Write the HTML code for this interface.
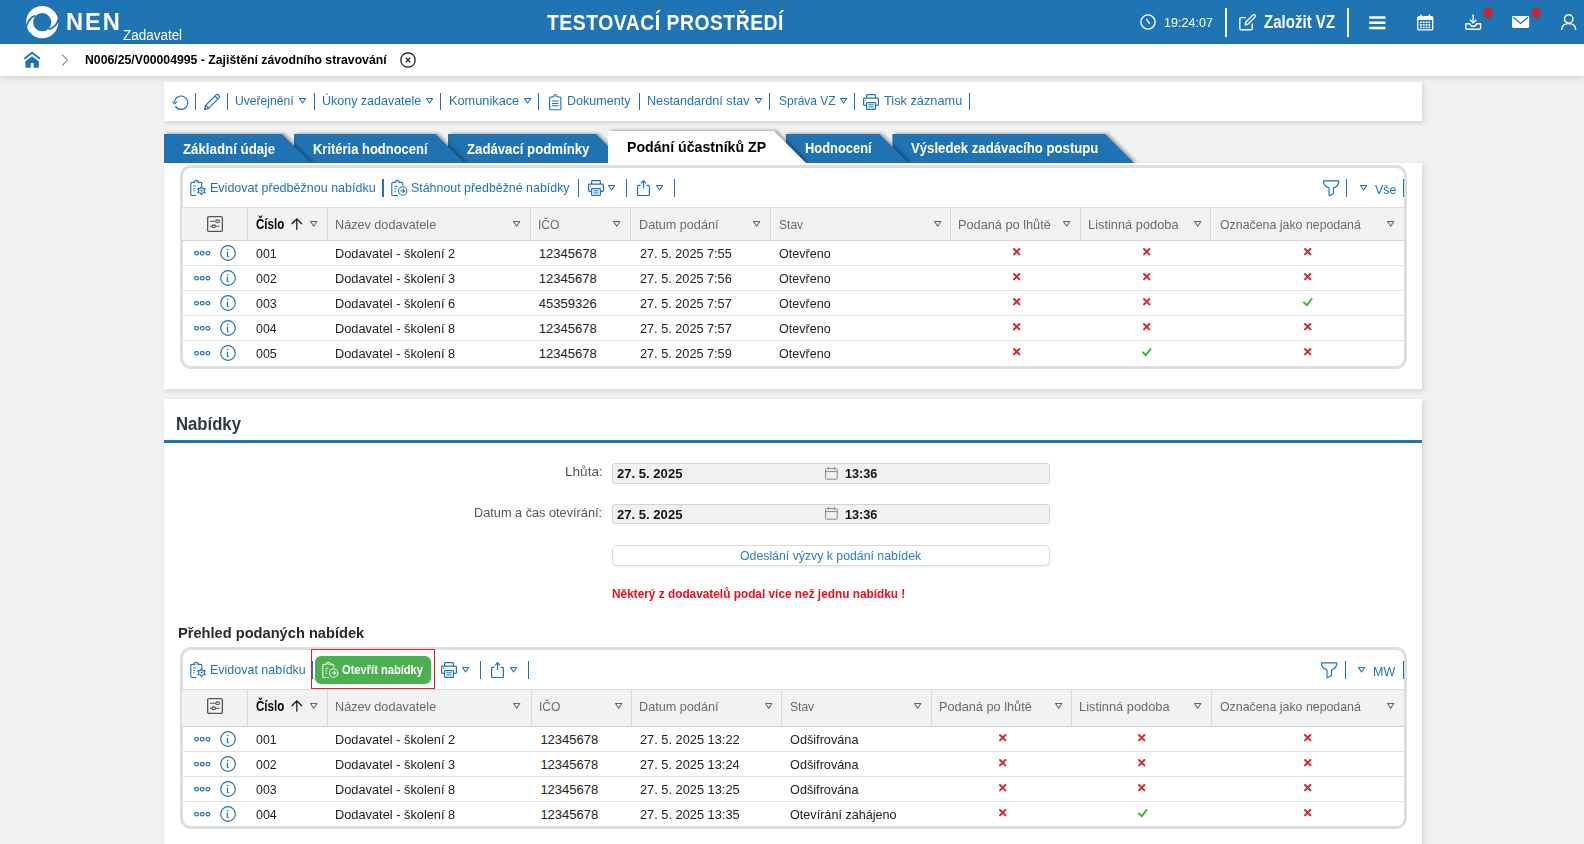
<!DOCTYPE html>
<html><head><meta charset="utf-8"><title>NEN</title>
<style>
html,body{margin:0;padding:0;}
body{width:1584px;height:844px;overflow:hidden;position:relative;background:#f1f1f1;font-family:"Liberation Sans",sans-serif;}
</style></head><body>
<div style="position:absolute;left:0px;top:0px;width:1584px;height:44px;background:#1f74b4"></div><svg style="position:absolute;left:25.7px;top:5.7px;width:32.4px;height:32.4px;overflow:visible" viewBox="0 0 32.4 32.4" ><circle cx="16.2" cy="16.2" r="12.6" fill="none" stroke="#fff" stroke-width="7"/><path d="M-0.2 22.6 Q2.6 11.2 9.4 9.6" fill="none" stroke="#1f74b4" stroke-width="1.8"/><path d="M32.6 12.4 Q31 21.4 22.4 23.4" fill="none" stroke="#1f74b4" stroke-width="1.8"/></svg><div style="position:absolute;left:65.80px;top:9.86px;font-size:24.5px;line-height:24.5px;font-weight:700;color:#fff;white-space:nowrap;transform:scaleX(0.9665);transform-origin:0 0;letter-spacing:2px">NEN</div><div style="position:absolute;left:123.00px;top:28.15px;font-size:14px;line-height:14px;font-weight:400;color:#fff;white-space:nowrap;transform:scaleX(0.9613);transform-origin:0 0;">Zadavatel</div><div style="position:absolute;left:547.00px;top:11.55px;font-size:22.5px;line-height:22.5px;font-weight:700;color:#fff;white-space:nowrap;transform:scaleX(0.8599);transform-origin:0 0;letter-spacing:0.6px">TESTOVACÍ PROSTŘEDÍ</div><svg style="position:absolute;left:1139.5px;top:14.2px;width:16px;height:16px;overflow:visible" viewBox="0 0 16 16" ><circle cx="8" cy="8" r="7.1" fill="none" stroke="#fff" stroke-width="1.4"/><path d="M6.6 5.4 L9.4 9.4" stroke="#fff" stroke-width="1.4" stroke-linecap="round"/></svg><div style="position:absolute;left:1164.00px;top:16.00px;font-size:13px;line-height:13px;font-weight:400;color:#fff;white-space:nowrap;transform:scaleX(0.9668);transform-origin:0 0;">19:24:07</div><div style="position:absolute;left:1225.2px;top:8px;width:2.2px;height:28.7px;background:#fff"></div><svg style="position:absolute;left:1239px;top:13.8px;width:17.5px;height:16.5px;overflow:visible" viewBox="0 0 17.5 16.5" ><path d="M7 3.6 H2 Q0.8 3.6 0.8 4.8 V14.6 Q0.8 15.8 2 15.8 H12 Q13.2 15.8 13.2 14.6 V9.6" fill="none" stroke="#fff" stroke-width="1.4"/><path d="M6.2 10.8 L6.8 8 L14 0.9 Q15 0.2 16 1 Q16.8 2 16 3 L8.8 10.2 Z" fill="none" stroke="#fff" stroke-width="1.4" stroke-linejoin="round"/></svg><div style="position:absolute;left:1263.60px;top:13.70px;font-size:17.6px;line-height:17.6px;font-weight:700;color:#fff;white-space:nowrap;transform:scaleX(0.8556);transform-origin:0 0;">Založit VZ</div><div style="position:absolute;left:1347.3px;top:8px;width:2.2px;height:28.7px;background:#fff"></div><svg style="position:absolute;left:1368.8px;top:15.5px;width:16.6px;height:13.4px;overflow:visible" viewBox="0 0 16.6 13.4" ><path d="M1.2 1.4 H15.4 M1.2 6.7 H15.4 M1.2 12 H15.4" stroke="#fff" stroke-width="2.5" stroke-linecap="round"/></svg><svg style="position:absolute;left:1416.6px;top:13.6px;width:16.4px;height:16.6px;overflow:visible" viewBox="0 0 16.4 16.6" ><rect x="0.7" y="2.8" width="15" height="13.1" rx="1.2" fill="none" stroke="#fff" stroke-width="1.4"/><rect x="0.7" y="2.8" width="15" height="3.2" fill="#fff"/><path d="M4 0.5 V3.5 M12.4 0.5 V3.5" stroke="#fff" stroke-width="1.4"/><rect x="3.0" y="7.4" width="1.8" height="1.7" fill="#fff"/><rect x="3.0" y="10.0" width="1.8" height="1.7" fill="#fff"/><rect x="3.0" y="12.600000000000001" width="1.8" height="1.7" fill="#fff"/><rect x="5.8" y="7.4" width="1.8" height="1.7" fill="#fff"/><rect x="5.8" y="10.0" width="1.8" height="1.7" fill="#fff"/><rect x="5.8" y="12.600000000000001" width="1.8" height="1.7" fill="#fff"/><rect x="8.6" y="7.4" width="1.8" height="1.7" fill="#fff"/><rect x="8.6" y="10.0" width="1.8" height="1.7" fill="#fff"/><rect x="8.6" y="12.600000000000001" width="1.8" height="1.7" fill="#fff"/><rect x="11.399999999999999" y="7.4" width="1.8" height="1.7" fill="#fff"/><rect x="11.399999999999999" y="10.0" width="1.8" height="1.7" fill="#fff"/><rect x="11.399999999999999" y="12.600000000000001" width="1.8" height="1.7" fill="#fff"/></svg><svg style="position:absolute;left:1464.7px;top:14px;width:16.4px;height:16px;overflow:visible" viewBox="0 0 16.4 16" ><path d="M8.2 0.6 V9 M5 5.8 L8.2 9 L11.4 5.8" fill="none" stroke="#fff" stroke-width="1.4" stroke-linejoin="round"/><path d="M0.8 9.8 V14.2 Q0.8 15.3 1.9 15.3 H14.5 Q15.6 15.3 15.6 14.2 V9.8 H11.6 Q10.8 12.4 8.2 12.4 Q5.6 12.4 4.8 9.8 Z" fill="none" stroke="#fff" stroke-width="1.4" stroke-linejoin="round"/></svg><div style="position:absolute;left:1483px;top:7.9px;width:10px;height:10px;border-radius:50%;background:#c8282d"></div><svg style="position:absolute;left:1512px;top:16px;width:17.2px;height:12px;overflow:visible" viewBox="0 0 17.2 12" ><rect x="0" y="0" width="17.2" height="12" rx="1.4" fill="#fff"/><path d="M1.2 1.2 L8.6 7.4 L16 1.2" fill="none" stroke="#1f74b4" stroke-width="1.2"/></svg><div style="position:absolute;left:1531.1px;top:7.9px;width:10px;height:10px;border-radius:50%;background:#c8282d"></div><svg style="position:absolute;left:1561px;top:14px;width:15.4px;height:16.2px;overflow:visible" viewBox="0 0 15.4 16.2" ><circle cx="7.7" cy="4.9" r="4.2" fill="none" stroke="#fff" stroke-width="1.4"/><path d="M0.7 16 Q0.7 9.6 7.7 9.6 Q14.7 9.6 14.7 16" fill="none" stroke="#fff" stroke-width="1.4"/></svg><div style="position:absolute;left:0px;top:44px;width:1584px;height:32px;background:#fff;box-shadow:0 2px 5px rgba(0,0,0,0.13)"></div><svg style="position:absolute;left:24px;top:52px;width:16.2px;height:16.2px;overflow:visible" viewBox="0 0 16.2 16.2" ><path d="M0.9 6.2 L8.1 0.7 L15.3 6.2" fill="none" stroke="#1f73b3" stroke-width="1.8" stroke-linecap="round" stroke-linejoin="round"/><path d="M1.4 9.3 L8.1 4.3 L14.9 9.3 V15.0 Q14.9 15.7 14.2 15.7 H9.6 V11.0 H6.8 V15.7 H2.1 Q1.4 15.7 1.4 15.0 Z" fill="#1f73b3"/></svg><svg style="position:absolute;left:61px;top:54px;width:7.5px;height:12.5px;overflow:visible" viewBox="0 0 7.5 12.5" ><path d="M1 0.6 L6.6 6.1 L1 11.6" fill="none" stroke="#333" stroke-width="0.9"/></svg><div style="position:absolute;left:85.00px;top:53.00px;font-size:13px;line-height:13px;font-weight:700;color:#000;white-space:nowrap;transform:scaleX(0.9423);transform-origin:0 0;">N006/25/V00004995 - Zajištění závodního stravování</div><svg style="position:absolute;left:400.3px;top:52px;width:16px;height:16px;overflow:visible" viewBox="0 0 16 16" ><circle cx="8" cy="8" r="7.2" fill="none" stroke="#111" stroke-width="1.2"/><path d="M5.7 5.7 L10.3 10.3 M10.3 5.7 L5.7 10.3" stroke="#111" stroke-width="1.2"/></svg><div style="position:absolute;left:164px;top:82px;width:1258px;height:39px;background:#fff;box-shadow:2px 2px 5px rgba(0,0,0,0.12)"></div><svg style="position:absolute;left:172px;top:94.5px;width:16px;height:15px;overflow:visible" viewBox="0 0 16 15" ><path d="M3.4 11.1 A6.7 6.7 0 1 0 2.5 7.4" fill="none" stroke="#1f73b3" stroke-width="1.2"/><path d="M0.4 6.6 L2.7 8.9 L5.0 6.6" fill="none" stroke="#1f73b3" stroke-width="1.2" stroke-linejoin="round"/></svg><div style="position:absolute;left:194.75px;top:93px;width:1.3px;height:17px;background:#1f73b3"></div><svg style="position:absolute;left:204px;top:94px;width:16px;height:16px;overflow:visible" viewBox="0 0 16 16" ><path d="M0.6 15.5 L1.7 11.2 L12.2 0.9 Q13.4 -0.1 14.6 1.0 L15.0 1.4 Q16.0 2.6 15.0 3.8 L4.8 14.2 Z" fill="none" stroke="#1f73b3" stroke-width="1.2" stroke-linejoin="round"/><path d="M11.0 2.2 L13.8 5.0 M1.7 11.2 L4.8 14.2" fill="none" stroke="#1f73b3" stroke-width="1.2"/><path d="M0.6 15.5 L1.2 13.2 L2.9 14.9 Z" fill="#1f73b3"/></svg><div style="position:absolute;left:226.85px;top:93px;width:1.3px;height:17px;background:#1f73b3"></div><div style="position:absolute;left:235.47px;top:94.00px;font-size:13px;line-height:13px;font-weight:400;color:#1f73b3;white-space:nowrap;transform:scaleX(0.9316);transform-origin:0 0;">Uveřejnění</div><svg style="position:absolute;left:299.2px;top:98.4px;width:7.2px;height:5.6px;overflow:visible" viewBox="0 0 7.2 5.6" ><path d="M0.55 0.55 L6.65 0.55 L3.6 5.05 Z" fill="none" stroke="#1f73b3" stroke-width="1.1" stroke-linejoin="round"/></svg><div style="position:absolute;left:313.65000000000003px;top:93px;width:1.3px;height:17px;background:#1f73b3"></div><div style="position:absolute;left:322.04px;top:94.00px;font-size:13px;line-height:13px;font-weight:400;color:#1f73b3;white-space:nowrap;transform:scaleX(0.9598);transform-origin:0 0;">Úkony zadavatele</div><svg style="position:absolute;left:426.2px;top:98.4px;width:7.2px;height:5.6px;overflow:visible" viewBox="0 0 7.2 5.6" ><path d="M0.55 0.55 L6.65 0.55 L3.6 5.05 Z" fill="none" stroke="#1f73b3" stroke-width="1.1" stroke-linejoin="round"/></svg><div style="position:absolute;left:439.85px;top:93px;width:1.3px;height:17px;background:#1f73b3"></div><div style="position:absolute;left:449.02px;top:94.00px;font-size:13px;line-height:13px;font-weight:400;color:#1f73b3;white-space:nowrap;transform:scaleX(0.9814);transform-origin:0 0;">Komunikace</div><svg style="position:absolute;left:524.3px;top:98.4px;width:7.2px;height:5.6px;overflow:visible" viewBox="0 0 7.2 5.6" ><path d="M0.55 0.55 L6.65 0.55 L3.6 5.05 Z" fill="none" stroke="#1f73b3" stroke-width="1.1" stroke-linejoin="round"/></svg><div style="position:absolute;left:537.75px;top:93px;width:1.3px;height:17px;background:#1f73b3"></div><svg style="position:absolute;left:548.9px;top:94px;width:12.5px;height:16.4px;overflow:visible" viewBox="0 0 12.5 16.4" ><path d="M3.4 3 H1.5 Q0.6 3 0.6 3.9 V14.9 Q0.6 15.8 1.5 15.8 H11 Q11.9 15.8 11.9 14.9 V3.9 Q11.9 3 11 3 H9" fill="none" stroke="#1f73b3" stroke-width="1.15"/><path d="M3.4 3.6 Q3.4 2.4 4.6 2.3 Q5 0.5 6.25 0.5 Q7.5 0.5 7.9 2.3 Q9.1 2.4 9.1 3.6" fill="none" stroke="#1f73b3" stroke-width="1.15"/><circle cx="6.25" cy="2.2" r="0.55" fill="#1f73b3"/><path d="M3 7.1 H9.5 M3 9.5 H9.5 M3 11.8 H9.5" stroke="#1f73b3" stroke-width="1.05"/></svg><div style="position:absolute;left:567.03px;top:94.00px;font-size:13px;line-height:13px;font-weight:400;color:#1f73b3;white-space:nowrap;transform:scaleX(0.9655);transform-origin:0 0;">Dokumenty</div><div style="position:absolute;left:638.75px;top:93px;width:1.3px;height:17px;background:#1f73b3"></div><div style="position:absolute;left:647.03px;top:94.00px;font-size:13px;line-height:13px;font-weight:400;color:#1f73b3;white-space:nowrap;transform:scaleX(0.9714);transform-origin:0 0;">Nestandardní stav</div><svg style="position:absolute;left:754.8px;top:98.4px;width:7.2px;height:5.6px;overflow:visible" viewBox="0 0 7.2 5.6" ><path d="M0.55 0.55 L6.65 0.55 L3.6 5.05 Z" fill="none" stroke="#1f73b3" stroke-width="1.1" stroke-linejoin="round"/></svg><div style="position:absolute;left:768.75px;top:93px;width:1.3px;height:17px;background:#1f73b3"></div><div style="position:absolute;left:779.00px;top:94.00px;font-size:13px;line-height:13px;font-weight:400;color:#1f73b3;white-space:nowrap;transform:scaleX(0.9207);transform-origin:0 0;">Správa VZ</div><svg style="position:absolute;left:839.8px;top:98.4px;width:7.2px;height:5.6px;overflow:visible" viewBox="0 0 7.2 5.6" ><path d="M0.55 0.55 L6.65 0.55 L3.6 5.05 Z" fill="none" stroke="#1f73b3" stroke-width="1.1" stroke-linejoin="round"/></svg><div style="position:absolute;left:853.85px;top:93px;width:1.3px;height:17px;background:#1f73b3"></div><svg style="position:absolute;left:863px;top:94.2px;width:16px;height:16px;overflow:visible" viewBox="0 0 16 16" ><path d="M3.6 4.2 V1.4 Q3.6 0.6 4.4 0.6 H11.6 Q12.4 0.6 12.4 1.4 V4.2" fill="none" stroke="#1f73b3" stroke-width="1.2"/><path d="M3.4 11.4 H1.4 Q0.6 11.4 0.6 10.6 V5 Q0.6 4.2 1.4 4.2 H14.6 Q15.4 4.2 15.4 5 V10.6 Q15.4 11.4 14.6 11.4 H12.6" fill="none" stroke="#1f73b3" stroke-width="1.2"/><rect x="3.6" y="8.6" width="8.8" height="6.8" rx="0.6" fill="none" stroke="#1f73b3" stroke-width="1.2"/><path d="M5.4 10.8 H10.6 M5.4 12.9 H10.6" stroke="#1f73b3" stroke-width="1"/><circle cx="2.6" cy="6.3" r="0.6" fill="#1f73b3"/></svg><div style="position:absolute;left:884.00px;top:94.00px;font-size:13px;line-height:13px;font-weight:400;color:#1f73b3;white-space:nowrap;transform:scaleX(0.9814);transform-origin:0 0;">Tisk záznamu</div><div style="position:absolute;left:969.15px;top:93px;width:1.3px;height:17px;background:#1f73b3"></div><svg style="position:absolute;left:0;top:0;width:1584px;height:170px" viewBox="0 0 1584 170"><defs><filter id="sh" x="-20%" y="-40%" width="140%" height="180%" color-interpolation-filters="sRGB"><feDropShadow dx="2.4" dy="-0.8" stdDeviation="1.6" flood-color="#000" flood-opacity="0.32"/></filter></defs><path d="M892.4 163 L892.4 134 L1105.2 134 L1134.2 163 Z" fill="#1f73b3" filter="url(#sh)"/><path d="M785.8 163 L785.8 134 L879.5 134 L908.5 163 Z" fill="#1f73b3" filter="url(#sh)"/><path d="M448 163 L448 134 L596 134 L625 163 Z" fill="#1f73b3" filter="url(#sh)"/><path d="M294 163 L294 134 L435.7 134 L464.7 163 Z" fill="#1f73b3" filter="url(#sh)"/><path d="M164 163 L164 134 L282 134 L311 163 Z" fill="#1f73b3" filter="url(#sh)"/><path d="M608 163 L608 131 L774 131 L806 163 Z" fill="#fff" filter="url(#sh)"/></svg><div style="position:absolute;left:164px;top:163px;width:1258px;height:226px;background:#fff;box-shadow:2px 2px 5px rgba(0,0,0,0.12)"></div><div style="position:absolute;left:182.70px;top:142.52px;font-size:13.8px;line-height:13.8px;font-weight:700;color:#fff;white-space:nowrap;transform:scaleX(0.9619);transform-origin:0 0;">Základní údaje</div><div style="position:absolute;left:313.00px;top:142.52px;font-size:13.8px;line-height:13.8px;font-weight:700;color:#fff;white-space:nowrap;transform:scaleX(0.9394);transform-origin:0 0;">Kritéria hodnocení</div><div style="position:absolute;left:466.60px;top:142.52px;font-size:13.8px;line-height:13.8px;font-weight:700;color:#fff;white-space:nowrap;transform:scaleX(0.9558);transform-origin:0 0;">Zadávací podmínky</div><div style="position:absolute;left:626.78px;top:138.85px;font-size:15.3px;line-height:15.3px;font-weight:700;color:#000;white-space:nowrap;transform:scaleX(0.9247);transform-origin:0 0;">Podání účastníků ZP</div><div style="position:absolute;left:805.00px;top:141.52px;font-size:13.8px;line-height:13.8px;font-weight:700;color:#fff;white-space:nowrap;transform:scaleX(0.9345);transform-origin:0 0;">Hodnocení</div><div style="position:absolute;left:910.80px;top:141.52px;font-size:13.8px;line-height:13.8px;font-weight:700;color:#fff;white-space:nowrap;transform:scaleX(0.9548);transform-origin:0 0;">Výsledek zadávacího postupu</div><div style="position:absolute;left:179.5px;top:165px;width:1227.5px;height:204px;box-sizing:border-box;border:3px solid #dcdee1;border-radius:11px;background:#fff"></div><div style="position:absolute;left:182px;top:207px;width:1222px;height:34px;background:#f2f2f2;border-top:1px solid #dcdcdc;border-bottom:1px solid #d4d4d4;box-sizing:border-box"></div><div style="position:absolute;left:246.8px;top:208px;width:1px;height:32px;background:#d8d8d8"></div><div style="position:absolute;left:327.0px;top:208px;width:1px;height:32px;background:#d8d8d8"></div><div style="position:absolute;left:530.0px;top:208px;width:1px;height:32px;background:#d8d8d8"></div><div style="position:absolute;left:630.0px;top:208px;width:1px;height:32px;background:#d8d8d8"></div><div style="position:absolute;left:770.0px;top:208px;width:1px;height:32px;background:#d8d8d8"></div><div style="position:absolute;left:950.0px;top:208px;width:1px;height:32px;background:#d8d8d8"></div><div style="position:absolute;left:1080.0px;top:208px;width:1px;height:32px;background:#d8d8d8"></div><div style="position:absolute;left:1210.1px;top:208px;width:1px;height:32px;background:#d8d8d8"></div><svg style="position:absolute;left:207.2px;top:216.2px;width:16px;height:16px;overflow:visible" viewBox="0 0 16 16" ><rect x="0.65" y="0.65" width="14.7" height="14.7" rx="1.2" fill="none" stroke="#555" stroke-width="1.3"/><path d="M3 5.3 H12.6 M3 10.3 H12.6" stroke="#555" stroke-width="1.1"/><ellipse cx="10.6" cy="5.3" rx="1.8" ry="1.4" fill="#f2f2f2" stroke="#555" stroke-width="1.1"/><ellipse cx="6.8" cy="10.3" rx="1.8" ry="1.4" fill="#f2f2f2" stroke="#555" stroke-width="1.1"/></svg><div style="position:absolute;left:256.00px;top:217.28px;font-size:14.2px;line-height:14.2px;font-weight:700;color:#000;white-space:nowrap;transform:scaleX(0.8138);transform-origin:0 0;">Číslo</div><div style="position:absolute;left:335.03px;top:217.80px;font-size:13px;line-height:13px;font-weight:400;color:#6b6b6b;white-space:nowrap;transform:scaleX(0.9724);transform-origin:0 0;">Název dodavatele</div><div style="position:absolute;left:537.87px;top:217.80px;font-size:13px;line-height:13px;font-weight:400;color:#6b6b6b;white-space:nowrap;transform:scaleX(0.9318);transform-origin:0 0;">IČO</div><div style="position:absolute;left:638.53px;top:217.80px;font-size:13px;line-height:13px;font-weight:400;color:#6b6b6b;white-space:nowrap;transform:scaleX(0.9735);transform-origin:0 0;">Datum podání</div><div style="position:absolute;left:779.00px;top:217.80px;font-size:13px;line-height:13px;font-weight:400;color:#6b6b6b;white-space:nowrap;transform:scaleX(0.9279);transform-origin:0 0;">Stav</div><div style="position:absolute;left:958.22px;top:217.80px;font-size:13px;line-height:13px;font-weight:400;color:#6b6b6b;white-space:nowrap;transform:scaleX(0.9801);transform-origin:0 0;">Podaná po lhůtě</div><div style="position:absolute;left:1088.01px;top:217.80px;font-size:13px;line-height:13px;font-weight:400;color:#6b6b6b;white-space:nowrap;transform:scaleX(0.9872);transform-origin:0 0;">Listinná podoba</div><div style="position:absolute;left:1219.70px;top:217.80px;font-size:13px;line-height:13px;font-weight:400;color:#6b6b6b;white-space:nowrap;transform:scaleX(0.9507);transform-origin:0 0;">Označena jako nepodaná</div><svg style="position:absolute;left:310.2px;top:221.20000000000002px;width:7.4px;height:5.8px;overflow:visible" viewBox="0 0 7.4 5.8" ><path d="M0.525 0.525 L6.875 0.525 L3.7 5.2749999999999995 Z" fill="none" stroke="#666" stroke-width="1.05" stroke-linejoin="round"/></svg><svg style="position:absolute;left:512.9px;top:221.20000000000002px;width:7.4px;height:5.8px;overflow:visible" viewBox="0 0 7.4 5.8" ><path d="M0.525 0.525 L6.875 0.525 L3.7 5.2749999999999995 Z" fill="none" stroke="#666" stroke-width="1.05" stroke-linejoin="round"/></svg><svg style="position:absolute;left:613px;top:221.20000000000002px;width:7.4px;height:5.8px;overflow:visible" viewBox="0 0 7.4 5.8" ><path d="M0.525 0.525 L6.875 0.525 L3.7 5.2749999999999995 Z" fill="none" stroke="#666" stroke-width="1.05" stroke-linejoin="round"/></svg><svg style="position:absolute;left:753px;top:221.20000000000002px;width:7.4px;height:5.8px;overflow:visible" viewBox="0 0 7.4 5.8" ><path d="M0.525 0.525 L6.875 0.525 L3.7 5.2749999999999995 Z" fill="none" stroke="#666" stroke-width="1.05" stroke-linejoin="round"/></svg><svg style="position:absolute;left:933.6px;top:221.20000000000002px;width:7.4px;height:5.8px;overflow:visible" viewBox="0 0 7.4 5.8" ><path d="M0.525 0.525 L6.875 0.525 L3.7 5.2749999999999995 Z" fill="none" stroke="#666" stroke-width="1.05" stroke-linejoin="round"/></svg><svg style="position:absolute;left:1063.4px;top:221.20000000000002px;width:7.4px;height:5.8px;overflow:visible" viewBox="0 0 7.4 5.8" ><path d="M0.525 0.525 L6.875 0.525 L3.7 5.2749999999999995 Z" fill="none" stroke="#666" stroke-width="1.05" stroke-linejoin="round"/></svg><svg style="position:absolute;left:1193.6px;top:221.20000000000002px;width:7.4px;height:5.8px;overflow:visible" viewBox="0 0 7.4 5.8" ><path d="M0.525 0.525 L6.875 0.525 L3.7 5.2749999999999995 Z" fill="none" stroke="#666" stroke-width="1.05" stroke-linejoin="round"/></svg><svg style="position:absolute;left:1386.5px;top:221.20000000000002px;width:7.4px;height:5.8px;overflow:visible" viewBox="0 0 7.4 5.8" ><path d="M0.525 0.525 L6.875 0.525 L3.7 5.2749999999999995 Z" fill="none" stroke="#666" stroke-width="1.05" stroke-linejoin="round"/></svg><svg style="position:absolute;left:291px;top:218.0px;width:11.6px;height:12px;overflow:visible" viewBox="0 0 11.6 12" ><path d="M5.8 11.8 V1 M0.7 6 L5.8 0.9 L10.9 6" fill="none" stroke="#111" stroke-width="1.2"/></svg><div style="position:absolute;left:182px;top:265.3px;width:1222px;height:1px;background:#e2e2e2"></div><svg style="position:absolute;left:194.0px;top:250.70000000000002px;width:16.2px;height:4.4px;overflow:visible" viewBox="0 0 16.2 4.4" ><rect x="0.6" y="0.6" width="3.8" height="3.2" rx="1.5" fill="none" stroke="#1f73b3" stroke-width="1.2"/><rect x="6.3" y="0.6" width="3.8" height="3.2" rx="1.5" fill="none" stroke="#1f73b3" stroke-width="1.2"/><rect x="12.0" y="0.6" width="3.8" height="3.2" rx="1.5" fill="none" stroke="#1f73b3" stroke-width="1.2"/></svg><svg style="position:absolute;left:220px;top:244.9px;width:16px;height:16px;overflow:visible" viewBox="0 0 16 16" ><circle cx="8" cy="8" r="7.3" fill="none" stroke="#1f73b3" stroke-width="1.2"/><circle cx="7.6" cy="4.6" r="0.75" fill="#1f73b3"/><path d="M7.4 6.8 V10.6 Q7.6 11.8 8.8 11.6" fill="none" stroke="#1f73b3" stroke-width="1.2"/></svg><div style="position:absolute;left:256.30px;top:246.90px;font-size:13px;line-height:13px;font-weight:400;color:#222;white-space:nowrap;transform:scaleX(0.9553);transform-origin:0 0;">001</div><div style="position:absolute;left:335.02px;top:246.90px;font-size:13px;line-height:13px;font-weight:400;color:#222;white-space:nowrap;transform:scaleX(0.9843);transform-origin:0 0;">Dodavatel - školení 2</div><div style="position:absolute;left:538.80px;top:246.90px;font-size:13px;line-height:13px;font-weight:400;color:#222;white-space:nowrap;">12345678</div><div style="position:absolute;left:639.50px;top:246.90px;font-size:13px;line-height:13px;font-weight:400;color:#222;white-space:nowrap;transform:scaleX(0.9761);transform-origin:0 0;">27. 5. 2025 7:55</div><div style="position:absolute;left:779.00px;top:246.90px;font-size:13px;line-height:13px;font-weight:400;color:#222;white-space:nowrap;transform:scaleX(0.9654);transform-origin:0 0;">Otevřeno</div><svg style="position:absolute;left:1012.5999999999999px;top:248.4px;width:7.4px;height:7.4px;overflow:visible" viewBox="0 0 7.4 7.4" ><path d="M1 1 L6.4 6.4 M6.4 1 L1 6.4" stroke="#d32a2a" stroke-width="2" stroke-linecap="round"/></svg><svg style="position:absolute;left:1142.8px;top:248.4px;width:7.4px;height:7.4px;overflow:visible" viewBox="0 0 7.4 7.4" ><path d="M1 1 L6.4 6.4 M6.4 1 L1 6.4" stroke="#d32a2a" stroke-width="2" stroke-linecap="round"/></svg><svg style="position:absolute;left:1303.8px;top:248.4px;width:7.4px;height:7.4px;overflow:visible" viewBox="0 0 7.4 7.4" ><path d="M1 1 L6.4 6.4 M6.4 1 L1 6.4" stroke="#d32a2a" stroke-width="2" stroke-linecap="round"/></svg><div style="position:absolute;left:182px;top:290.3px;width:1222px;height:1px;background:#e2e2e2"></div><svg style="position:absolute;left:194.0px;top:275.7px;width:16.2px;height:4.4px;overflow:visible" viewBox="0 0 16.2 4.4" ><rect x="0.6" y="0.6" width="3.8" height="3.2" rx="1.5" fill="none" stroke="#1f73b3" stroke-width="1.2"/><rect x="6.3" y="0.6" width="3.8" height="3.2" rx="1.5" fill="none" stroke="#1f73b3" stroke-width="1.2"/><rect x="12.0" y="0.6" width="3.8" height="3.2" rx="1.5" fill="none" stroke="#1f73b3" stroke-width="1.2"/></svg><svg style="position:absolute;left:220px;top:269.9px;width:16px;height:16px;overflow:visible" viewBox="0 0 16 16" ><circle cx="8" cy="8" r="7.3" fill="none" stroke="#1f73b3" stroke-width="1.2"/><circle cx="7.6" cy="4.6" r="0.75" fill="#1f73b3"/><path d="M7.4 6.8 V10.6 Q7.6 11.8 8.8 11.6" fill="none" stroke="#1f73b3" stroke-width="1.2"/></svg><div style="position:absolute;left:256.30px;top:271.90px;font-size:13px;line-height:13px;font-weight:400;color:#222;white-space:nowrap;transform:scaleX(0.9553);transform-origin:0 0;">002</div><div style="position:absolute;left:335.02px;top:271.90px;font-size:13px;line-height:13px;font-weight:400;color:#222;white-space:nowrap;transform:scaleX(0.9843);transform-origin:0 0;">Dodavatel - školení 3</div><div style="position:absolute;left:538.80px;top:271.90px;font-size:13px;line-height:13px;font-weight:400;color:#222;white-space:nowrap;">12345678</div><div style="position:absolute;left:639.50px;top:271.90px;font-size:13px;line-height:13px;font-weight:400;color:#222;white-space:nowrap;transform:scaleX(0.9761);transform-origin:0 0;">27. 5. 2025 7:56</div><div style="position:absolute;left:779.00px;top:271.90px;font-size:13px;line-height:13px;font-weight:400;color:#222;white-space:nowrap;transform:scaleX(0.9654);transform-origin:0 0;">Otevřeno</div><svg style="position:absolute;left:1012.5999999999999px;top:273.40000000000003px;width:7.4px;height:7.4px;overflow:visible" viewBox="0 0 7.4 7.4" ><path d="M1 1 L6.4 6.4 M6.4 1 L1 6.4" stroke="#d32a2a" stroke-width="2" stroke-linecap="round"/></svg><svg style="position:absolute;left:1142.8px;top:273.40000000000003px;width:7.4px;height:7.4px;overflow:visible" viewBox="0 0 7.4 7.4" ><path d="M1 1 L6.4 6.4 M6.4 1 L1 6.4" stroke="#d32a2a" stroke-width="2" stroke-linecap="round"/></svg><svg style="position:absolute;left:1303.8px;top:273.40000000000003px;width:7.4px;height:7.4px;overflow:visible" viewBox="0 0 7.4 7.4" ><path d="M1 1 L6.4 6.4 M6.4 1 L1 6.4" stroke="#d32a2a" stroke-width="2" stroke-linecap="round"/></svg><div style="position:absolute;left:182px;top:315.3px;width:1222px;height:1px;background:#e2e2e2"></div><svg style="position:absolute;left:194.0px;top:300.7px;width:16.2px;height:4.4px;overflow:visible" viewBox="0 0 16.2 4.4" ><rect x="0.6" y="0.6" width="3.8" height="3.2" rx="1.5" fill="none" stroke="#1f73b3" stroke-width="1.2"/><rect x="6.3" y="0.6" width="3.8" height="3.2" rx="1.5" fill="none" stroke="#1f73b3" stroke-width="1.2"/><rect x="12.0" y="0.6" width="3.8" height="3.2" rx="1.5" fill="none" stroke="#1f73b3" stroke-width="1.2"/></svg><svg style="position:absolute;left:220px;top:294.9px;width:16px;height:16px;overflow:visible" viewBox="0 0 16 16" ><circle cx="8" cy="8" r="7.3" fill="none" stroke="#1f73b3" stroke-width="1.2"/><circle cx="7.6" cy="4.6" r="0.75" fill="#1f73b3"/><path d="M7.4 6.8 V10.6 Q7.6 11.8 8.8 11.6" fill="none" stroke="#1f73b3" stroke-width="1.2"/></svg><div style="position:absolute;left:256.30px;top:296.90px;font-size:13px;line-height:13px;font-weight:400;color:#222;white-space:nowrap;transform:scaleX(0.9553);transform-origin:0 0;">003</div><div style="position:absolute;left:335.02px;top:296.90px;font-size:13px;line-height:13px;font-weight:400;color:#222;white-space:nowrap;transform:scaleX(0.9843);transform-origin:0 0;">Dodavatel - školení 6</div><div style="position:absolute;left:538.80px;top:296.90px;font-size:13px;line-height:13px;font-weight:400;color:#222;white-space:nowrap;">45359326</div><div style="position:absolute;left:639.50px;top:296.90px;font-size:13px;line-height:13px;font-weight:400;color:#222;white-space:nowrap;transform:scaleX(0.9761);transform-origin:0 0;">27. 5. 2025 7:57</div><div style="position:absolute;left:779.00px;top:296.90px;font-size:13px;line-height:13px;font-weight:400;color:#222;white-space:nowrap;transform:scaleX(0.9654);transform-origin:0 0;">Otevřeno</div><svg style="position:absolute;left:1012.5999999999999px;top:298.40000000000003px;width:7.4px;height:7.4px;overflow:visible" viewBox="0 0 7.4 7.4" ><path d="M1 1 L6.4 6.4 M6.4 1 L1 6.4" stroke="#d32a2a" stroke-width="2" stroke-linecap="round"/></svg><svg style="position:absolute;left:1142.8px;top:298.40000000000003px;width:7.4px;height:7.4px;overflow:visible" viewBox="0 0 7.4 7.4" ><path d="M1 1 L6.4 6.4 M6.4 1 L1 6.4" stroke="#d32a2a" stroke-width="2" stroke-linecap="round"/></svg><svg style="position:absolute;left:1303.1px;top:298.3px;width:9.6px;height:8px;overflow:visible" viewBox="0 0 9.6 8" ><path d="M1 4.4 L3.8 7.2 L8.6 1" fill="none" stroke="#33bb33" stroke-width="2" stroke-linecap="round" stroke-linejoin="round"/></svg><div style="position:absolute;left:182px;top:340.3px;width:1222px;height:1px;background:#e2e2e2"></div><svg style="position:absolute;left:194.0px;top:325.7px;width:16.2px;height:4.4px;overflow:visible" viewBox="0 0 16.2 4.4" ><rect x="0.6" y="0.6" width="3.8" height="3.2" rx="1.5" fill="none" stroke="#1f73b3" stroke-width="1.2"/><rect x="6.3" y="0.6" width="3.8" height="3.2" rx="1.5" fill="none" stroke="#1f73b3" stroke-width="1.2"/><rect x="12.0" y="0.6" width="3.8" height="3.2" rx="1.5" fill="none" stroke="#1f73b3" stroke-width="1.2"/></svg><svg style="position:absolute;left:220px;top:319.9px;width:16px;height:16px;overflow:visible" viewBox="0 0 16 16" ><circle cx="8" cy="8" r="7.3" fill="none" stroke="#1f73b3" stroke-width="1.2"/><circle cx="7.6" cy="4.6" r="0.75" fill="#1f73b3"/><path d="M7.4 6.8 V10.6 Q7.6 11.8 8.8 11.6" fill="none" stroke="#1f73b3" stroke-width="1.2"/></svg><div style="position:absolute;left:256.30px;top:321.90px;font-size:13px;line-height:13px;font-weight:400;color:#222;white-space:nowrap;transform:scaleX(0.9553);transform-origin:0 0;">004</div><div style="position:absolute;left:335.02px;top:321.90px;font-size:13px;line-height:13px;font-weight:400;color:#222;white-space:nowrap;transform:scaleX(0.9843);transform-origin:0 0;">Dodavatel - školení 8</div><div style="position:absolute;left:538.80px;top:321.90px;font-size:13px;line-height:13px;font-weight:400;color:#222;white-space:nowrap;">12345678</div><div style="position:absolute;left:639.50px;top:321.90px;font-size:13px;line-height:13px;font-weight:400;color:#222;white-space:nowrap;transform:scaleX(0.9761);transform-origin:0 0;">27. 5. 2025 7:57</div><div style="position:absolute;left:779.00px;top:321.90px;font-size:13px;line-height:13px;font-weight:400;color:#222;white-space:nowrap;transform:scaleX(0.9654);transform-origin:0 0;">Otevřeno</div><svg style="position:absolute;left:1012.5999999999999px;top:323.40000000000003px;width:7.4px;height:7.4px;overflow:visible" viewBox="0 0 7.4 7.4" ><path d="M1 1 L6.4 6.4 M6.4 1 L1 6.4" stroke="#d32a2a" stroke-width="2" stroke-linecap="round"/></svg><svg style="position:absolute;left:1142.8px;top:323.40000000000003px;width:7.4px;height:7.4px;overflow:visible" viewBox="0 0 7.4 7.4" ><path d="M1 1 L6.4 6.4 M6.4 1 L1 6.4" stroke="#d32a2a" stroke-width="2" stroke-linecap="round"/></svg><svg style="position:absolute;left:1303.8px;top:323.40000000000003px;width:7.4px;height:7.4px;overflow:visible" viewBox="0 0 7.4 7.4" ><path d="M1 1 L6.4 6.4 M6.4 1 L1 6.4" stroke="#d32a2a" stroke-width="2" stroke-linecap="round"/></svg><svg style="position:absolute;left:194.0px;top:350.7px;width:16.2px;height:4.4px;overflow:visible" viewBox="0 0 16.2 4.4" ><rect x="0.6" y="0.6" width="3.8" height="3.2" rx="1.5" fill="none" stroke="#1f73b3" stroke-width="1.2"/><rect x="6.3" y="0.6" width="3.8" height="3.2" rx="1.5" fill="none" stroke="#1f73b3" stroke-width="1.2"/><rect x="12.0" y="0.6" width="3.8" height="3.2" rx="1.5" fill="none" stroke="#1f73b3" stroke-width="1.2"/></svg><svg style="position:absolute;left:220px;top:344.9px;width:16px;height:16px;overflow:visible" viewBox="0 0 16 16" ><circle cx="8" cy="8" r="7.3" fill="none" stroke="#1f73b3" stroke-width="1.2"/><circle cx="7.6" cy="4.6" r="0.75" fill="#1f73b3"/><path d="M7.4 6.8 V10.6 Q7.6 11.8 8.8 11.6" fill="none" stroke="#1f73b3" stroke-width="1.2"/></svg><div style="position:absolute;left:256.30px;top:346.90px;font-size:13px;line-height:13px;font-weight:400;color:#222;white-space:nowrap;transform:scaleX(0.9553);transform-origin:0 0;">005</div><div style="position:absolute;left:335.02px;top:346.90px;font-size:13px;line-height:13px;font-weight:400;color:#222;white-space:nowrap;transform:scaleX(0.9843);transform-origin:0 0;">Dodavatel - školení 8</div><div style="position:absolute;left:538.80px;top:346.90px;font-size:13px;line-height:13px;font-weight:400;color:#222;white-space:nowrap;">12345678</div><div style="position:absolute;left:639.50px;top:346.90px;font-size:13px;line-height:13px;font-weight:400;color:#222;white-space:nowrap;transform:scaleX(0.9761);transform-origin:0 0;">27. 5. 2025 7:59</div><div style="position:absolute;left:779.00px;top:346.90px;font-size:13px;line-height:13px;font-weight:400;color:#222;white-space:nowrap;transform:scaleX(0.9654);transform-origin:0 0;">Otevřeno</div><svg style="position:absolute;left:1012.5999999999999px;top:348.40000000000003px;width:7.4px;height:7.4px;overflow:visible" viewBox="0 0 7.4 7.4" ><path d="M1 1 L6.4 6.4 M6.4 1 L1 6.4" stroke="#d32a2a" stroke-width="2" stroke-linecap="round"/></svg><svg style="position:absolute;left:1142.1px;top:348.3px;width:9.6px;height:8px;overflow:visible" viewBox="0 0 9.6 8" ><path d="M1 4.4 L3.8 7.2 L8.6 1" fill="none" stroke="#33bb33" stroke-width="2" stroke-linecap="round" stroke-linejoin="round"/></svg><svg style="position:absolute;left:1303.8px;top:348.40000000000003px;width:7.4px;height:7.4px;overflow:visible" viewBox="0 0 7.4 7.4" ><path d="M1 1 L6.4 6.4 M6.4 1 L1 6.4" stroke="#d32a2a" stroke-width="2" stroke-linecap="round"/></svg><svg style="position:absolute;left:189.8px;top:180px;width:16px;height:16px;overflow:visible" viewBox="0 0 16 16" ><path d="M4.2 2.4 H2 Q0.8 2.4 0.8 3.6 V14.4 Q0.8 15.5 2 15.5 H6.2" fill="none" stroke="#1f73b3" stroke-width="1.1"/><path d="M8.4 2.4 H10.6 Q11.8 2.4 11.8 3.6 V6.4" fill="none" stroke="#1f73b3" stroke-width="1.1"/><path d="M4.2 3.2 Q4.2 0.4 6.3 0.4 Q8.4 0.4 8.4 3.2" fill="none" stroke="#1f73b3" stroke-width="1.1"/><circle cx="6.3" cy="2.2" r="0.5" fill="#1f73b3"/><path d="M3.2 6 H5.8 M3.2 8.5 H4.8 M3.2 10.7 H4.6" stroke="#1f73b3" stroke-width="1.1"/><path d="M11.5 6.6 L12.8 8.6 L15.2 8.6 L14 10.6 L15.2 12.7 L12.8 12.7 L11.5 14.8 L10.2 12.7 L7.8 12.7 L9 10.6 L7.8 8.6 L10.2 8.6 Z" fill="none" stroke="#1f73b3" stroke-width="1.1" stroke-linejoin="round"/><circle cx="11.5" cy="10.6" r="1" fill="#1f73b3"/></svg><div style="position:absolute;left:209.54px;top:180.80px;font-size:13px;line-height:13px;font-weight:400;color:#1f73b3;white-space:nowrap;transform:scaleX(0.9632);transform-origin:0 0;">Evidovat předběžnou nabídku</div><div style="position:absolute;left:382.35px;top:179px;width:1.3px;height:17.5px;background:#1f73b3"></div><svg style="position:absolute;left:390.8px;top:180px;width:16px;height:16px;overflow:visible" viewBox="0 0 16 16" ><path d="M4.2 2.4 H2 Q0.8 2.4 0.8 3.6 V14.4 Q0.8 15.5 2 15.5 H7" fill="none" stroke="#1f73b3" stroke-width="1.1"/><path d="M8.4 2.4 H10.6 Q11.8 2.4 11.8 3.6 V5.4" fill="none" stroke="#1f73b3" stroke-width="1.1"/><path d="M4.2 3.2 Q4.2 0.4 6.3 0.4 Q8.4 0.4 8.4 3.2" fill="none" stroke="#1f73b3" stroke-width="1.1"/><circle cx="6.3" cy="2.2" r="0.5" fill="#1f73b3"/><path d="M3.4 6.2 H6.4 M3.4 8.8 H5.4 M3.4 11.2 H5.2" stroke="#1f73b3" stroke-width="1.1"/><circle cx="11.6" cy="11" r="4.2" fill="none" stroke="#1f73b3" stroke-width="1.1"/><path d="M9.4 11 H13.6 M11.8 9.2 L13.6 11 L11.8 12.8" fill="none" stroke="#1f73b3" stroke-width="1.1"/></svg><div style="position:absolute;left:411.40px;top:180.80px;font-size:13px;line-height:13px;font-weight:400;color:#1f73b3;white-space:nowrap;transform:scaleX(0.9536);transform-origin:0 0;">Stáhnout předběžné nabídky</div><div style="position:absolute;left:577.75px;top:179px;width:1.3px;height:17.5px;background:#1f73b3"></div><svg style="position:absolute;left:587.6px;top:180px;width:16px;height:16px;overflow:visible" viewBox="0 0 16 16" ><path d="M3.6 4.2 V1.4 Q3.6 0.6 4.4 0.6 H11.6 Q12.4 0.6 12.4 1.4 V4.2" fill="none" stroke="#1f73b3" stroke-width="1.2"/><path d="M3.4 11.4 H1.4 Q0.6 11.4 0.6 10.6 V5 Q0.6 4.2 1.4 4.2 H14.6 Q15.4 4.2 15.4 5 V10.6 Q15.4 11.4 14.6 11.4 H12.6" fill="none" stroke="#1f73b3" stroke-width="1.2"/><rect x="3.6" y="8.6" width="8.8" height="6.8" rx="0.6" fill="none" stroke="#1f73b3" stroke-width="1.2"/><path d="M5.4 10.8 H10.6 M5.4 12.9 H10.6" stroke="#1f73b3" stroke-width="1"/><circle cx="2.6" cy="6.3" r="0.6" fill="#1f73b3"/></svg><svg style="position:absolute;left:607.6px;top:185.2px;width:7.2px;height:5.6px;overflow:visible" viewBox="0 0 7.2 5.6" ><path d="M0.55 0.55 L6.65 0.55 L3.6 5.05 Z" fill="none" stroke="#1f73b3" stroke-width="1.1" stroke-linejoin="round"/></svg><div style="position:absolute;left:625.75px;top:179px;width:1.3px;height:17.5px;background:#1f73b3"></div><svg style="position:absolute;left:637.2px;top:180px;width:13px;height:16px;overflow:visible" viewBox="0 0 13 16" ><path d="M3.6 5.4 H1.4 Q0.6 5.4 0.6 6.2 V14.8 Q0.6 15.5 1.4 15.5 H11.6 Q12.4 15.5 12.4 14.8 V6.2 Q12.4 5.4 11.6 5.4 H9.4" fill="none" stroke="#1f73b3" stroke-width="1.2"/><path d="M6.5 8.2 V0.9 M3.9 3.3 L6.5 0.7 L9.1 3.3" fill="none" stroke="#1f73b3" stroke-width="1.2" stroke-linejoin="round"/></svg><svg style="position:absolute;left:655.6px;top:185.2px;width:7.2px;height:5.6px;overflow:visible" viewBox="0 0 7.2 5.6" ><path d="M0.55 0.55 L6.65 0.55 L3.6 5.05 Z" fill="none" stroke="#1f73b3" stroke-width="1.1" stroke-linejoin="round"/></svg><div style="position:absolute;left:674.0500000000001px;top:179px;width:1.3px;height:17.5px;background:#1f73b3"></div><svg style="position:absolute;left:1322.8px;top:179.8px;width:16.4px;height:16px;overflow:visible" viewBox="0 0 16.4 16" ><path d="M1 0.9 H15.4 Q16.2 1 15.9 2.2 Q15 6.6 10.5 7.9 V13.4 L6.9 15.6 Q6 15.9 6 15 V7.9 Q1.4 6.6 0.5 2.2 Q0.2 1 1 0.9 Z" fill="none" stroke="#1f73b3" stroke-width="1.15" stroke-linejoin="round"/></svg><div style="position:absolute;left:1345.9499999999998px;top:179px;width:1.3px;height:17.80000000000001px;background:#1f73b3"></div><svg style="position:absolute;left:1359.8px;top:185.2px;width:7.2px;height:5.6px;overflow:visible" viewBox="0 0 7.2 5.6" ><path d="M0.55 0.55 L6.65 0.55 L3.6 5.05 Z" fill="none" stroke="#1f73b3" stroke-width="1.1" stroke-linejoin="round"/></svg><div style="position:absolute;left:1375.00px;top:183.40px;font-size:13px;line-height:13px;font-weight:400;color:#1f73b3;white-space:nowrap;transform:scaleX(0.9562);transform-origin:0 0;">Vše</div><div style="position:absolute;left:1402.9499999999998px;top:179px;width:1.3px;height:17.80000000000001px;background:#1f73b3"></div><div style="position:absolute;left:164px;top:399px;width:1258px;height:460px;background:#fff;box-shadow:2px 2px 5px rgba(0,0,0,0.12)"></div><div style="position:absolute;left:175.77px;top:414.56px;font-size:18px;line-height:18px;font-weight:700;color:#2f3942;white-space:nowrap;transform:scaleX(0.9274);transform-origin:0 0;">Nabídky</div><div style="position:absolute;left:164px;top:440px;width:1258px;height:3px;background:#1f73b3"></div><div style="position:absolute;left:564.65px;top:465.00px;font-size:13px;line-height:13px;font-weight:400;color:#555;white-space:nowrap;transform:scaleX(1.0454);transform-origin:0 0;">Lhůta:</div><div style="position:absolute;left:474.32px;top:506.00px;font-size:13px;line-height:13px;font-weight:400;color:#555;white-space:nowrap;transform:scaleX(0.9793);transform-origin:0 0;">Datum a čas otevírání:</div><div style="position:absolute;left:612.3px;top:463.2px;width:437.5px;height:20.4px;box-sizing:border-box;background:#f1f1f1;border:1px solid #d4d4d4;border-radius:3px"></div><div style="position:absolute;left:616.80px;top:466.70px;font-size:13px;line-height:13px;font-weight:700;color:#111;white-space:nowrap;transform:scaleX(1.0058);transform-origin:0 0;">27. 5. 2025</div><svg style="position:absolute;left:824.6px;top:466.59999999999997px;width:12.8px;height:12.8px;overflow:visible" viewBox="0 0 12.8 12.8" ><rect x="0.6" y="1.6" width="11.6" height="10.6" rx="0.8" fill="none" stroke="#888" stroke-width="1"/><path d="M0.6 4.6 H12.2 M3.4 0.2 V2.6 M9.4 0.2 V2.6" stroke="#888" stroke-width="1"/></svg><div style="position:absolute;left:845.20px;top:466.70px;font-size:13px;line-height:13px;font-weight:700;color:#111;white-space:nowrap;transform:scaleX(0.9722);transform-origin:0 0;">13:36</div><div style="position:absolute;left:612.3px;top:504px;width:437.5px;height:20.4px;box-sizing:border-box;background:#f1f1f1;border:1px solid #d4d4d4;border-radius:3px"></div><div style="position:absolute;left:616.80px;top:507.50px;font-size:13px;line-height:13px;font-weight:700;color:#111;white-space:nowrap;transform:scaleX(1.0058);transform-origin:0 0;">27. 5. 2025</div><svg style="position:absolute;left:824.6px;top:507.4px;width:12.8px;height:12.8px;overflow:visible" viewBox="0 0 12.8 12.8" ><rect x="0.6" y="1.6" width="11.6" height="10.6" rx="0.8" fill="none" stroke="#888" stroke-width="1"/><path d="M0.6 4.6 H12.2 M3.4 0.2 V2.6 M9.4 0.2 V2.6" stroke="#888" stroke-width="1"/></svg><div style="position:absolute;left:845.20px;top:507.50px;font-size:13px;line-height:13px;font-weight:700;color:#111;white-space:nowrap;transform:scaleX(0.9722);transform-origin:0 0;">13:36</div><div style="position:absolute;left:612.3px;top:545px;width:437.5px;height:20.8px;box-sizing:border-box;background:#fff;border:1px solid #dadada;border-radius:5px;box-shadow:0 1px 2px rgba(0,0,0,0.08)"></div><div style="position:absolute;left:740.30px;top:549.00px;font-size:13px;line-height:13px;font-weight:400;color:#2e7fbf;white-space:nowrap;transform:scaleX(0.9458);transform-origin:0 0;">Odeslání výzvy k podání nabídek</div><div style="position:absolute;left:612.30px;top:586.80px;font-size:13px;line-height:13px;font-weight:700;color:#e8101e;white-space:nowrap;transform:scaleX(0.9104);transform-origin:0 0;">Některý z dodavatelů podal více než jednu nabídku !</div><div style="position:absolute;left:178.46px;top:624.68px;font-size:15.5px;line-height:15.5px;font-weight:700;color:#2a2a2a;white-space:nowrap;transform:scaleX(0.9440);transform-origin:0 0;">Přehled podaných nabídek</div><div style="position:absolute;left:179.5px;top:647.2px;width:1227.5px;height:182.19999999999993px;box-sizing:border-box;border:3px solid #dcdee1;border-radius:11px;background:#fff"></div><div style="position:absolute;left:182px;top:689px;width:1222px;height:38px;background:#f2f2f2;border-top:1px solid #dcdcdc;border-bottom:1px solid #d4d4d4;box-sizing:border-box"></div><div style="position:absolute;left:247.0px;top:690px;width:1px;height:36px;background:#d8d8d8"></div><div style="position:absolute;left:327.0px;top:690px;width:1px;height:36px;background:#d8d8d8"></div><div style="position:absolute;left:530.8px;top:690px;width:1px;height:36px;background:#d8d8d8"></div><div style="position:absolute;left:630.8px;top:690px;width:1px;height:36px;background:#d8d8d8"></div><div style="position:absolute;left:780.8px;top:690px;width:1px;height:36px;background:#d8d8d8"></div><div style="position:absolute;left:930.9px;top:690px;width:1px;height:36px;background:#d8d8d8"></div><div style="position:absolute;left:1071.1px;top:690px;width:1px;height:36px;background:#d8d8d8"></div><div style="position:absolute;left:1211.3px;top:690px;width:1px;height:36px;background:#d8d8d8"></div><svg style="position:absolute;left:207.2px;top:698.2px;width:16px;height:16px;overflow:visible" viewBox="0 0 16 16" ><rect x="0.65" y="0.65" width="14.7" height="14.7" rx="1.2" fill="none" stroke="#555" stroke-width="1.3"/><path d="M3 5.3 H12.6 M3 10.3 H12.6" stroke="#555" stroke-width="1.1"/><ellipse cx="10.6" cy="5.3" rx="1.8" ry="1.4" fill="#f2f2f2" stroke="#555" stroke-width="1.1"/><ellipse cx="6.8" cy="10.3" rx="1.8" ry="1.4" fill="#f2f2f2" stroke="#555" stroke-width="1.1"/></svg><div style="position:absolute;left:256.40px;top:699.28px;font-size:14.2px;line-height:14.2px;font-weight:700;color:#000;white-space:nowrap;transform:scaleX(0.8138);transform-origin:0 0;">Číslo</div><div style="position:absolute;left:335.03px;top:699.80px;font-size:13px;line-height:13px;font-weight:400;color:#6b6b6b;white-space:nowrap;transform:scaleX(0.9724);transform-origin:0 0;">Název dodavatele</div><div style="position:absolute;left:539.47px;top:699.80px;font-size:13px;line-height:13px;font-weight:400;color:#6b6b6b;white-space:nowrap;transform:scaleX(0.9318);transform-origin:0 0;">IČO</div><div style="position:absolute;left:639.43px;top:699.80px;font-size:13px;line-height:13px;font-weight:400;color:#6b6b6b;white-space:nowrap;transform:scaleX(0.9735);transform-origin:0 0;">Datum podání</div><div style="position:absolute;left:790.30px;top:699.80px;font-size:13px;line-height:13px;font-weight:400;color:#6b6b6b;white-space:nowrap;transform:scaleX(0.9279);transform-origin:0 0;">Stav</div><div style="position:absolute;left:939.32px;top:699.80px;font-size:13px;line-height:13px;font-weight:400;color:#6b6b6b;white-space:nowrap;transform:scaleX(0.9801);transform-origin:0 0;">Podaná po lhůtě</div><div style="position:absolute;left:1079.31px;top:699.80px;font-size:13px;line-height:13px;font-weight:400;color:#6b6b6b;white-space:nowrap;transform:scaleX(0.9872);transform-origin:0 0;">Listinná podoba</div><div style="position:absolute;left:1220.30px;top:699.80px;font-size:13px;line-height:13px;font-weight:400;color:#6b6b6b;white-space:nowrap;transform:scaleX(0.9507);transform-origin:0 0;">Označena jako nepodaná</div><svg style="position:absolute;left:310.2px;top:703.1999999999999px;width:7.4px;height:5.8px;overflow:visible" viewBox="0 0 7.4 5.8" ><path d="M0.525 0.525 L6.875 0.525 L3.7 5.2749999999999995 Z" fill="none" stroke="#666" stroke-width="1.05" stroke-linejoin="round"/></svg><svg style="position:absolute;left:512.9px;top:703.1999999999999px;width:7.4px;height:5.8px;overflow:visible" viewBox="0 0 7.4 5.8" ><path d="M0.525 0.525 L6.875 0.525 L3.7 5.2749999999999995 Z" fill="none" stroke="#666" stroke-width="1.05" stroke-linejoin="round"/></svg><svg style="position:absolute;left:614.7px;top:703.1999999999999px;width:7.4px;height:5.8px;overflow:visible" viewBox="0 0 7.4 5.8" ><path d="M0.525 0.525 L6.875 0.525 L3.7 5.2749999999999995 Z" fill="none" stroke="#666" stroke-width="1.05" stroke-linejoin="round"/></svg><svg style="position:absolute;left:764.6px;top:703.1999999999999px;width:7.4px;height:5.8px;overflow:visible" viewBox="0 0 7.4 5.8" ><path d="M0.525 0.525 L6.875 0.525 L3.7 5.2749999999999995 Z" fill="none" stroke="#666" stroke-width="1.05" stroke-linejoin="round"/></svg><svg style="position:absolute;left:914px;top:703.1999999999999px;width:7.4px;height:5.8px;overflow:visible" viewBox="0 0 7.4 5.8" ><path d="M0.525 0.525 L6.875 0.525 L3.7 5.2749999999999995 Z" fill="none" stroke="#666" stroke-width="1.05" stroke-linejoin="round"/></svg><svg style="position:absolute;left:1054.5px;top:703.1999999999999px;width:7.4px;height:5.8px;overflow:visible" viewBox="0 0 7.4 5.8" ><path d="M0.525 0.525 L6.875 0.525 L3.7 5.2749999999999995 Z" fill="none" stroke="#666" stroke-width="1.05" stroke-linejoin="round"/></svg><svg style="position:absolute;left:1194.3px;top:703.1999999999999px;width:7.4px;height:5.8px;overflow:visible" viewBox="0 0 7.4 5.8" ><path d="M0.525 0.525 L6.875 0.525 L3.7 5.2749999999999995 Z" fill="none" stroke="#666" stroke-width="1.05" stroke-linejoin="round"/></svg><svg style="position:absolute;left:1386.5px;top:703.1999999999999px;width:7.4px;height:5.8px;overflow:visible" viewBox="0 0 7.4 5.8" ><path d="M0.525 0.525 L6.875 0.525 L3.7 5.2749999999999995 Z" fill="none" stroke="#666" stroke-width="1.05" stroke-linejoin="round"/></svg><svg style="position:absolute;left:291px;top:700.0px;width:11.6px;height:12px;overflow:visible" viewBox="0 0 11.6 12" ><path d="M5.8 11.8 V1 M0.7 6 L5.8 0.9 L10.9 6" fill="none" stroke="#111" stroke-width="1.2"/></svg><div style="position:absolute;left:182px;top:751.3px;width:1222px;height:1px;background:#e2e2e2"></div><svg style="position:absolute;left:194.0px;top:736.6999999999999px;width:16.2px;height:4.4px;overflow:visible" viewBox="0 0 16.2 4.4" ><rect x="0.6" y="0.6" width="3.8" height="3.2" rx="1.5" fill="none" stroke="#1f73b3" stroke-width="1.2"/><rect x="6.3" y="0.6" width="3.8" height="3.2" rx="1.5" fill="none" stroke="#1f73b3" stroke-width="1.2"/><rect x="12.0" y="0.6" width="3.8" height="3.2" rx="1.5" fill="none" stroke="#1f73b3" stroke-width="1.2"/></svg><svg style="position:absolute;left:220px;top:730.9px;width:16px;height:16px;overflow:visible" viewBox="0 0 16 16" ><circle cx="8" cy="8" r="7.3" fill="none" stroke="#1f73b3" stroke-width="1.2"/><circle cx="7.6" cy="4.6" r="0.75" fill="#1f73b3"/><path d="M7.4 6.8 V10.6 Q7.6 11.8 8.8 11.6" fill="none" stroke="#1f73b3" stroke-width="1.2"/></svg><div style="position:absolute;left:256.40px;top:733.20px;font-size:13px;line-height:13px;font-weight:400;color:#222;white-space:nowrap;transform:scaleX(0.9553);transform-origin:0 0;">001</div><div style="position:absolute;left:335.02px;top:733.20px;font-size:13px;line-height:13px;font-weight:400;color:#222;white-space:nowrap;transform:scaleX(0.9843);transform-origin:0 0;">Dodavatel - školení 2</div><div style="position:absolute;left:540.40px;top:733.20px;font-size:13px;line-height:13px;font-weight:400;color:#222;white-space:nowrap;">12345678</div><div style="position:absolute;left:640.40px;top:733.20px;font-size:13px;line-height:13px;font-weight:400;color:#222;white-space:nowrap;transform:scaleX(0.9844);transform-origin:0 0;">27. 5. 2025 13:22</div><div style="position:absolute;left:790.30px;top:733.20px;font-size:13px;line-height:13px;font-weight:400;color:#222;white-space:nowrap;transform:scaleX(0.9766);transform-origin:0 0;">Odšifrována</div><svg style="position:absolute;left:998.5999999999999px;top:734.4px;width:7.4px;height:7.4px;overflow:visible" viewBox="0 0 7.4 7.4" ><path d="M1 1 L6.4 6.4 M6.4 1 L1 6.4" stroke="#d32a2a" stroke-width="2" stroke-linecap="round"/></svg><svg style="position:absolute;left:1138.3px;top:734.4px;width:7.4px;height:7.4px;overflow:visible" viewBox="0 0 7.4 7.4" ><path d="M1 1 L6.4 6.4 M6.4 1 L1 6.4" stroke="#d32a2a" stroke-width="2" stroke-linecap="round"/></svg><svg style="position:absolute;left:1304.3px;top:734.4px;width:7.4px;height:7.4px;overflow:visible" viewBox="0 0 7.4 7.4" ><path d="M1 1 L6.4 6.4 M6.4 1 L1 6.4" stroke="#d32a2a" stroke-width="2" stroke-linecap="round"/></svg><div style="position:absolute;left:182px;top:776.3px;width:1222px;height:1px;background:#e2e2e2"></div><svg style="position:absolute;left:194.0px;top:761.6999999999999px;width:16.2px;height:4.4px;overflow:visible" viewBox="0 0 16.2 4.4" ><rect x="0.6" y="0.6" width="3.8" height="3.2" rx="1.5" fill="none" stroke="#1f73b3" stroke-width="1.2"/><rect x="6.3" y="0.6" width="3.8" height="3.2" rx="1.5" fill="none" stroke="#1f73b3" stroke-width="1.2"/><rect x="12.0" y="0.6" width="3.8" height="3.2" rx="1.5" fill="none" stroke="#1f73b3" stroke-width="1.2"/></svg><svg style="position:absolute;left:220px;top:755.9px;width:16px;height:16px;overflow:visible" viewBox="0 0 16 16" ><circle cx="8" cy="8" r="7.3" fill="none" stroke="#1f73b3" stroke-width="1.2"/><circle cx="7.6" cy="4.6" r="0.75" fill="#1f73b3"/><path d="M7.4 6.8 V10.6 Q7.6 11.8 8.8 11.6" fill="none" stroke="#1f73b3" stroke-width="1.2"/></svg><div style="position:absolute;left:256.40px;top:758.20px;font-size:13px;line-height:13px;font-weight:400;color:#222;white-space:nowrap;transform:scaleX(0.9553);transform-origin:0 0;">002</div><div style="position:absolute;left:335.02px;top:758.20px;font-size:13px;line-height:13px;font-weight:400;color:#222;white-space:nowrap;transform:scaleX(0.9843);transform-origin:0 0;">Dodavatel - školení 3</div><div style="position:absolute;left:540.40px;top:758.20px;font-size:13px;line-height:13px;font-weight:400;color:#222;white-space:nowrap;">12345678</div><div style="position:absolute;left:640.40px;top:758.20px;font-size:13px;line-height:13px;font-weight:400;color:#222;white-space:nowrap;transform:scaleX(0.9844);transform-origin:0 0;">27. 5. 2025 13:24</div><div style="position:absolute;left:790.30px;top:758.20px;font-size:13px;line-height:13px;font-weight:400;color:#222;white-space:nowrap;transform:scaleX(0.9766);transform-origin:0 0;">Odšifrována</div><svg style="position:absolute;left:998.5999999999999px;top:759.4px;width:7.4px;height:7.4px;overflow:visible" viewBox="0 0 7.4 7.4" ><path d="M1 1 L6.4 6.4 M6.4 1 L1 6.4" stroke="#d32a2a" stroke-width="2" stroke-linecap="round"/></svg><svg style="position:absolute;left:1138.3px;top:759.4px;width:7.4px;height:7.4px;overflow:visible" viewBox="0 0 7.4 7.4" ><path d="M1 1 L6.4 6.4 M6.4 1 L1 6.4" stroke="#d32a2a" stroke-width="2" stroke-linecap="round"/></svg><svg style="position:absolute;left:1304.3px;top:759.4px;width:7.4px;height:7.4px;overflow:visible" viewBox="0 0 7.4 7.4" ><path d="M1 1 L6.4 6.4 M6.4 1 L1 6.4" stroke="#d32a2a" stroke-width="2" stroke-linecap="round"/></svg><div style="position:absolute;left:182px;top:801.3px;width:1222px;height:1px;background:#e2e2e2"></div><svg style="position:absolute;left:194.0px;top:786.6999999999999px;width:16.2px;height:4.4px;overflow:visible" viewBox="0 0 16.2 4.4" ><rect x="0.6" y="0.6" width="3.8" height="3.2" rx="1.5" fill="none" stroke="#1f73b3" stroke-width="1.2"/><rect x="6.3" y="0.6" width="3.8" height="3.2" rx="1.5" fill="none" stroke="#1f73b3" stroke-width="1.2"/><rect x="12.0" y="0.6" width="3.8" height="3.2" rx="1.5" fill="none" stroke="#1f73b3" stroke-width="1.2"/></svg><svg style="position:absolute;left:220px;top:780.9px;width:16px;height:16px;overflow:visible" viewBox="0 0 16 16" ><circle cx="8" cy="8" r="7.3" fill="none" stroke="#1f73b3" stroke-width="1.2"/><circle cx="7.6" cy="4.6" r="0.75" fill="#1f73b3"/><path d="M7.4 6.8 V10.6 Q7.6 11.8 8.8 11.6" fill="none" stroke="#1f73b3" stroke-width="1.2"/></svg><div style="position:absolute;left:256.40px;top:783.20px;font-size:13px;line-height:13px;font-weight:400;color:#222;white-space:nowrap;transform:scaleX(0.9553);transform-origin:0 0;">003</div><div style="position:absolute;left:335.02px;top:783.20px;font-size:13px;line-height:13px;font-weight:400;color:#222;white-space:nowrap;transform:scaleX(0.9843);transform-origin:0 0;">Dodavatel - školení 8</div><div style="position:absolute;left:540.40px;top:783.20px;font-size:13px;line-height:13px;font-weight:400;color:#222;white-space:nowrap;">12345678</div><div style="position:absolute;left:640.40px;top:783.20px;font-size:13px;line-height:13px;font-weight:400;color:#222;white-space:nowrap;transform:scaleX(0.9844);transform-origin:0 0;">27. 5. 2025 13:25</div><div style="position:absolute;left:790.30px;top:783.20px;font-size:13px;line-height:13px;font-weight:400;color:#222;white-space:nowrap;transform:scaleX(0.9766);transform-origin:0 0;">Odšifrována</div><svg style="position:absolute;left:998.5999999999999px;top:784.4px;width:7.4px;height:7.4px;overflow:visible" viewBox="0 0 7.4 7.4" ><path d="M1 1 L6.4 6.4 M6.4 1 L1 6.4" stroke="#d32a2a" stroke-width="2" stroke-linecap="round"/></svg><svg style="position:absolute;left:1138.3px;top:784.4px;width:7.4px;height:7.4px;overflow:visible" viewBox="0 0 7.4 7.4" ><path d="M1 1 L6.4 6.4 M6.4 1 L1 6.4" stroke="#d32a2a" stroke-width="2" stroke-linecap="round"/></svg><svg style="position:absolute;left:1304.3px;top:784.4px;width:7.4px;height:7.4px;overflow:visible" viewBox="0 0 7.4 7.4" ><path d="M1 1 L6.4 6.4 M6.4 1 L1 6.4" stroke="#d32a2a" stroke-width="2" stroke-linecap="round"/></svg><svg style="position:absolute;left:194.0px;top:811.6999999999999px;width:16.2px;height:4.4px;overflow:visible" viewBox="0 0 16.2 4.4" ><rect x="0.6" y="0.6" width="3.8" height="3.2" rx="1.5" fill="none" stroke="#1f73b3" stroke-width="1.2"/><rect x="6.3" y="0.6" width="3.8" height="3.2" rx="1.5" fill="none" stroke="#1f73b3" stroke-width="1.2"/><rect x="12.0" y="0.6" width="3.8" height="3.2" rx="1.5" fill="none" stroke="#1f73b3" stroke-width="1.2"/></svg><svg style="position:absolute;left:220px;top:805.9px;width:16px;height:16px;overflow:visible" viewBox="0 0 16 16" ><circle cx="8" cy="8" r="7.3" fill="none" stroke="#1f73b3" stroke-width="1.2"/><circle cx="7.6" cy="4.6" r="0.75" fill="#1f73b3"/><path d="M7.4 6.8 V10.6 Q7.6 11.8 8.8 11.6" fill="none" stroke="#1f73b3" stroke-width="1.2"/></svg><div style="position:absolute;left:256.40px;top:808.20px;font-size:13px;line-height:13px;font-weight:400;color:#222;white-space:nowrap;transform:scaleX(0.9553);transform-origin:0 0;">004</div><div style="position:absolute;left:335.02px;top:808.20px;font-size:13px;line-height:13px;font-weight:400;color:#222;white-space:nowrap;transform:scaleX(0.9843);transform-origin:0 0;">Dodavatel - školení 8</div><div style="position:absolute;left:540.40px;top:808.20px;font-size:13px;line-height:13px;font-weight:400;color:#222;white-space:nowrap;">12345678</div><div style="position:absolute;left:640.40px;top:808.20px;font-size:13px;line-height:13px;font-weight:400;color:#222;white-space:nowrap;transform:scaleX(0.9844);transform-origin:0 0;">27. 5. 2025 13:35</div><div style="position:absolute;left:790.30px;top:808.20px;font-size:13px;line-height:13px;font-weight:400;color:#222;white-space:nowrap;transform:scaleX(0.9707);transform-origin:0 0;">Otevírání zahájeno</div><svg style="position:absolute;left:998.5999999999999px;top:809.4px;width:7.4px;height:7.4px;overflow:visible" viewBox="0 0 7.4 7.4" ><path d="M1 1 L6.4 6.4 M6.4 1 L1 6.4" stroke="#d32a2a" stroke-width="2" stroke-linecap="round"/></svg><svg style="position:absolute;left:1137.6px;top:809.3000000000001px;width:9.6px;height:8px;overflow:visible" viewBox="0 0 9.6 8" ><path d="M1 4.4 L3.8 7.2 L8.6 1" fill="none" stroke="#33bb33" stroke-width="2" stroke-linecap="round" stroke-linejoin="round"/></svg><svg style="position:absolute;left:1304.3px;top:809.4px;width:7.4px;height:7.4px;overflow:visible" viewBox="0 0 7.4 7.4" ><path d="M1 1 L6.4 6.4 M6.4 1 L1 6.4" stroke="#d32a2a" stroke-width="2" stroke-linecap="round"/></svg><svg style="position:absolute;left:190px;top:662px;width:16px;height:16px;overflow:visible" viewBox="0 0 16 16" ><path d="M4.2 2.4 H2 Q0.8 2.4 0.8 3.6 V14.4 Q0.8 15.5 2 15.5 H6.2" fill="none" stroke="#1f73b3" stroke-width="1.1"/><path d="M8.4 2.4 H10.6 Q11.8 2.4 11.8 3.6 V6.4" fill="none" stroke="#1f73b3" stroke-width="1.1"/><path d="M4.2 3.2 Q4.2 0.4 6.3 0.4 Q8.4 0.4 8.4 3.2" fill="none" stroke="#1f73b3" stroke-width="1.1"/><circle cx="6.3" cy="2.2" r="0.5" fill="#1f73b3"/><path d="M3.2 6 H5.8 M3.2 8.5 H4.8 M3.2 10.7 H4.6" stroke="#1f73b3" stroke-width="1.1"/><path d="M11.5 6.6 L12.8 8.6 L15.2 8.6 L14 10.6 L15.2 12.7 L12.8 12.7 L11.5 14.8 L10.2 12.7 L7.8 12.7 L9 10.6 L7.8 8.6 L10.2 8.6 Z" fill="none" stroke="#1f73b3" stroke-width="1.1" stroke-linejoin="round"/><circle cx="11.5" cy="10.6" r="1" fill="#1f73b3"/></svg><div style="position:absolute;left:209.64px;top:663.10px;font-size:13px;line-height:13px;font-weight:400;color:#1f73b3;white-space:nowrap;transform:scaleX(0.9604);transform-origin:0 0;">Evidovat nabídku</div><div style="position:absolute;left:311.65000000000003px;top:661.2px;width:1.3px;height:17.399999999999977px;background:#1f73b3"></div><div style="position:absolute;left:315.2px;top:656.4px;width:115.8px;height:27.2px;border-radius:6px;background:#4caf50"></div><svg style="position:absolute;left:322px;top:662px;width:16px;height:16px;overflow:visible" viewBox="0 0 16 16" ><path d="M4.2 2.4 H2 Q0.8 2.4 0.8 3.6 V14.4 Q0.8 15.5 2 15.5 H7" fill="none" stroke="#e8f5e9" stroke-width="1.1"/><path d="M8.4 2.4 H10.6 Q11.8 2.4 11.8 3.6 V5.4" fill="none" stroke="#e8f5e9" stroke-width="1.1"/><path d="M4.2 3.2 Q4.2 0.4 6.3 0.4 Q8.4 0.4 8.4 3.2" fill="none" stroke="#e8f5e9" stroke-width="1.1"/><circle cx="6.3" cy="2.2" r="0.5" fill="#e8f5e9"/><path d="M3.4 6.2 H6.4 M3.4 8.8 H5.4 M3.4 11.2 H5.2" stroke="#e8f5e9" stroke-width="1.1"/><circle cx="11.6" cy="11" r="4.2" fill="none" stroke="#e8f5e9" stroke-width="1.1"/><path d="M9.4 11 H13.6 M11.8 9.2 L13.6 11 L11.8 12.8" fill="none" stroke="#e8f5e9" stroke-width="1.1"/></svg><div style="position:absolute;left:342.10px;top:663.82px;font-size:12.5px;line-height:12.5px;font-weight:700;color:#fff;white-space:nowrap;transform:scaleX(0.8897);transform-origin:0 0;">Otevřít nabídky</div><div style="position:absolute;left:311px;top:649.1px;width:123.8px;height:39.7px;box-sizing:border-box;border:1px solid #e0202a"></div><svg style="position:absolute;left:441.2px;top:662px;width:16px;height:16px;overflow:visible" viewBox="0 0 16 16" ><path d="M3.6 4.2 V1.4 Q3.6 0.6 4.4 0.6 H11.6 Q12.4 0.6 12.4 1.4 V4.2" fill="none" stroke="#1f73b3" stroke-width="1.2"/><path d="M3.4 11.4 H1.4 Q0.6 11.4 0.6 10.6 V5 Q0.6 4.2 1.4 4.2 H14.6 Q15.4 4.2 15.4 5 V10.6 Q15.4 11.4 14.6 11.4 H12.6" fill="none" stroke="#1f73b3" stroke-width="1.2"/><rect x="3.6" y="8.6" width="8.8" height="6.8" rx="0.6" fill="none" stroke="#1f73b3" stroke-width="1.2"/><path d="M5.4 10.8 H10.6 M5.4 12.9 H10.6" stroke="#1f73b3" stroke-width="1"/><circle cx="2.6" cy="6.3" r="0.6" fill="#1f73b3"/></svg><svg style="position:absolute;left:461.8px;top:667px;width:7.2px;height:5.6px;overflow:visible" viewBox="0 0 7.2 5.6" ><path d="M0.55 0.55 L6.65 0.55 L3.6 5.05 Z" fill="none" stroke="#1f73b3" stroke-width="1.1" stroke-linejoin="round"/></svg><div style="position:absolute;left:479.65000000000003px;top:661.2px;width:1.3px;height:17.399999999999977px;background:#1f73b3"></div><svg style="position:absolute;left:490.8px;top:662px;width:13px;height:16px;overflow:visible" viewBox="0 0 13 16" ><path d="M3.6 5.4 H1.4 Q0.6 5.4 0.6 6.2 V14.8 Q0.6 15.5 1.4 15.5 H11.6 Q12.4 15.5 12.4 14.8 V6.2 Q12.4 5.4 11.6 5.4 H9.4" fill="none" stroke="#1f73b3" stroke-width="1.2"/><path d="M6.5 8.2 V0.9 M3.9 3.3 L6.5 0.7 L9.1 3.3" fill="none" stroke="#1f73b3" stroke-width="1.2" stroke-linejoin="round"/></svg><svg style="position:absolute;left:509.8px;top:667px;width:7.2px;height:5.6px;overflow:visible" viewBox="0 0 7.2 5.6" ><path d="M0.55 0.55 L6.65 0.55 L3.6 5.05 Z" fill="none" stroke="#1f73b3" stroke-width="1.1" stroke-linejoin="round"/></svg><div style="position:absolute;left:527.65px;top:661.2px;width:1.3px;height:17.399999999999977px;background:#1f73b3"></div><svg style="position:absolute;left:1321.4px;top:662px;width:16.4px;height:16px;overflow:visible" viewBox="0 0 16.4 16" ><path d="M1 0.9 H15.4 Q16.2 1 15.9 2.2 Q15 6.6 10.5 7.9 V13.4 L6.9 15.6 Q6 15.9 6 15 V7.9 Q1.4 6.6 0.5 2.2 Q0.2 1 1 0.9 Z" fill="none" stroke="#1f73b3" stroke-width="1.15" stroke-linejoin="round"/></svg><div style="position:absolute;left:1345.05px;top:661.2px;width:1.3px;height:17.399999999999977px;background:#1f73b3"></div><svg style="position:absolute;left:1357.5px;top:667.2px;width:7.2px;height:5.6px;overflow:visible" viewBox="0 0 7.2 5.6" ><path d="M0.55 0.55 L6.65 0.55 L3.6 5.05 Z" fill="none" stroke="#1f73b3" stroke-width="1.1" stroke-linejoin="round"/></svg><div style="position:absolute;left:1372.74px;top:665.00px;font-size:13px;line-height:13px;font-weight:400;color:#1f73b3;white-space:nowrap;transform:scaleX(0.9637);transform-origin:0 0;">MW</div><div style="position:absolute;left:1402.75px;top:661.2px;width:1.3px;height:17.399999999999977px;background:#1f73b3"></div>
</body></html>
